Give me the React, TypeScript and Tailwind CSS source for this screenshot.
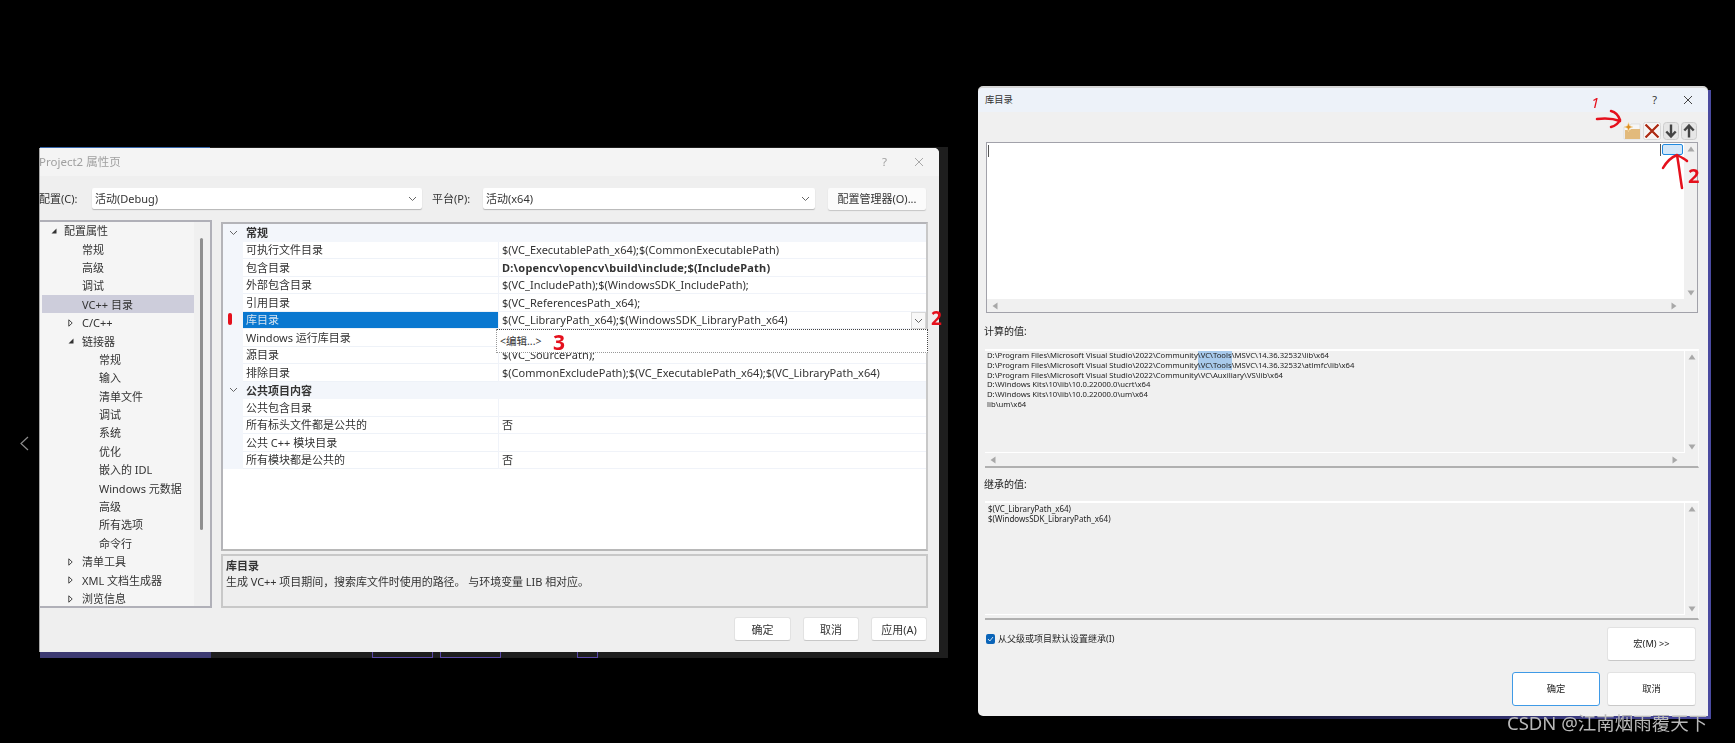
import React from "react";

const font = { fontFamily: '"Noto Sans","Noto Sans CJK SC",sans-serif' };

type Row = { name: string; value?: React.ReactNode; bold?: boolean; selected?: boolean };

const general: Row[] = [
  { name: "可执行文件目录", value: "$(VC_ExecutablePath_x64);$(CommonExecutablePath)" },
  { name: "包含目录", value: "D:\\opencv\\opencv\\build\\include;$(IncludePath)", bold: true },
  { name: "外部包含目录", value: "$(VC_IncludePath);$(WindowsSDK_IncludePath);" },
  { name: "引用目录", value: "$(VC_ReferencesPath_x64);" },
  { name: "库目录", value: "$(VC_LibraryPath_x64);$(WindowsSDK_LibraryPath_x64)", selected: true },
  { name: "Windows 运行库目录", value: "" },
  { name: "源目录", value: "$(VC_SourcePath);" },
  { name: "排除目录", value: "$(CommonExcludePath);$(VC_ExecutablePath_x64);$(VC_LibraryPath_x64)" },
];
const shared: Row[] = [
  { name: "公共包含目录" },
  { name: "所有标头文件都是公共的", value: "否" },
  { name: "公共 C++ 模块目录" },
  { name: "所有模块都是公共的", value: "否" },
];

type Node = { label: string; level: 0 | 1 | 2; tri?: "open" | "closed"; selected?: boolean };
const tree: Node[] = [
  { label: "配置属性", level: 0, tri: "open" },
  { label: "常规", level: 1 },
  { label: "高级", level: 1 },
  { label: "调试", level: 1 },
  { label: "VC++ 目录", level: 1, selected: true },
  { label: "C/C++", level: 1, tri: "closed" },
  { label: "链接器", level: 1, tri: "open" },
  { label: "常规", level: 2 },
  { label: "输入", level: 2 },
  { label: "清单文件", level: 2 },
  { label: "调试", level: 2 },
  { label: "系统", level: 2 },
  { label: "优化", level: 2 },
  { label: "嵌入的 IDL", level: 2 },
  { label: "Windows 元数据", level: 2 },
  { label: "高级", level: 2 },
  { label: "所有选项", level: 2 },
  { label: "命令行", level: 2 },
  { label: "清单工具", level: 1, tri: "closed" },
  { label: "XML 文档生成器", level: 1, tri: "closed" },
  { label: "浏览信息", level: 1, tri: "closed" },
];

function Chevron({ className = "" }: { className?: string }) {
  return (
    <svg width="9" height="6" viewBox="0 0 9 6" className={className}>
      <path d="M1 1l3.5 3.5L8 1" fill="none" stroke="#666" strokeWidth="1" />
    </svg>
  );
}

function Tri({ kind, className = "" }: { kind: "open" | "closed"; className?: string }) {
  return kind === "open" ? (
    <svg width="6" height="6" viewBox="0 0 6 6" className={className}>
      <path d="M5.5 0.5V5.5H0.5Z" fill="#333" />
    </svg>
  ) : (
    <svg width="5" height="8" viewBox="0 0 5 8" className={className}>
      <path d="M0.8 0.8L4.2 4L0.8 7.2Z" fill="#fff" stroke="#444" strokeWidth="1" />
    </svg>
  );
}

function Combo({ text, className }: { text: string; className: string }) {
  return (
    <div className={`h-[21px] bg-white rounded-[2px] shadow-[0_1px_1px_#b5b5b5] flex items-center justify-between pl-[3px] pr-[5px] ${className}`}>
      <span>{text}</span>
      <Chevron />
    </div>
  );
}

function GridRow({ row }: { row: Row }) {
  return (
    <div className="h-[17.5px] flex">
      <div className="w-[20px] bg-[#f3f6fb]" />
      <div className={`w-[255px] flex items-center pl-[3px] border-b border-[#eef2f8] ${row.selected ? "bg-[#0a78d0] text-[#d5e4f1]" : ""}`}>
        {row.name}
      </div>
      <div className={`flex-1 flex items-center pl-[3px] border-b border-l border-[#f0f3f9] whitespace-nowrap ${row.bold ? "font-bold tracking-[0.2px]" : ""}`}>
        {row.value}
      </div>
    </div>
  );
}

function GroupHeader({ label }: { label: string }) {
  return (
    <div className="h-[17.5px] flex items-center bg-[#f3f6fb] font-bold">
      <div className="w-[20px] flex justify-center">
        <Chevron />
      </div>
      <span className="pl-[3px]">{label}</span>
    </div>
  );
}

function Btn({ label, className = "" }: { label: string; className?: string }) {
  return (
    <div className={`bg-white rounded-[3px] border border-[#e2e2e2] border-b-[#c8c8c8] flex items-center justify-center ${className}`}>
      {label}
    </div>
  );
}

function PropertyDialog() {
  return (
    <div style={font} className="relative w-[900px] h-[504px] bg-[#efefef] border-l border-[#a8a8a8] rounded-tr-[5px] flex flex-col text-[11px] leading-none text-[#333] blur-[0.5px]">
      <div className="h-[28px] shrink-0 bg-[#f4f4f4] flex items-center justify-between pr-[15px] text-[11.5px] text-[#a0a0a0] rounded-tr-[5px]">
        <span className="-ml-[1px]">Project2 属性页</span>
        <div className="flex items-center gap-[27px]">
          <span>?</span>
          <svg width="10" height="10" viewBox="0 0 10 10">
            <path d="M1 1l8 8M9 1l-8 8" stroke="#a8a8a8" strokeWidth="1" />
          </svg>
        </div>
      </div>

      <div className="mt-[12px] h-[21px] shrink-0 flex items-center">
        <span className="w-[52px] -ml-[1px] mr-[1px]">配置(C):</span>
        <Combo text="活动(Debug)" className="w-[330px]" />
        <span className="ml-[10px] w-[51px]">平台(P):</span>
        <Combo text="活动(x64)" className="w-[332px]" />
        <div className="ml-[13px] w-[98px] h-[22px] bg-[#fbfbfb] rounded-[2px] shadow-[0_1px_1px_#c5c5c5] flex items-center justify-center">配置管理器(O)...</div>
      </div>

      <div className="mt-[11px] h-[388px] shrink-0 flex">
        <div className="w-[172px] border-y-2 border-r-2 border-[#b0b0b8] bg-[#f5f5f5] flex overflow-hidden">
          <div className="flex-1 -mt-[0.5px]">
            {tree.map((n, i) => (
              <div key={i} className={`relative h-[18.4px] flex items-center ${n.level === 0 ? "pl-[24px]" : n.level === 1 ? "pl-[42px]" : "pl-[59px]"} ${n.selected ? "bg-[#cdcddb] ml-[2px] !pl-[40px]" : ""}`}>
                {n.tri && <Tri kind={n.tri} className={`absolute ${n.level === 0 ? "left-[11px]" : "left-[28px]"}`} />}
                {n.label}
              </div>
            ))}
          </div>
          <div className="w-[16px] bg-[#f0f0f0] shrink-0 pt-[16px] pl-[6px]">
            <div className="w-[3px] h-[292px] bg-[#8f8f8f] rounded-full" />
          </div>
        </div>

        <div className="ml-[9px] w-[707px] flex flex-col">
          <div className="relative mt-[2px] h-[329px] border-2 border-[#b4b4b8] border-r-[#c8c8c8] border-b-[#b8b8b8] bg-white">
            <GroupHeader label="常规" />
            {general.map((r, i) => (
              <GridRow key={i} row={r} />
            ))}
            <GroupHeader label="公共项目内容" />
            {shared.map((r, i) => (
              <GridRow key={i} row={r} />
            ))}
            <div className="absolute right-0 top-[88px] w-[15px] h-[17px] bg-[#f8f8f8] border border-[#d8d8d8] flex items-center justify-center">
              <Chevron />
            </div>
            <div className="absolute left-[273px] top-[105px] w-[432px] h-[24px] bg-white border-t border-r border-dotted border-t-[#444] border-r-[#444] border-l border-b border-l-[#999] border-b-[#999] flex items-center pl-[3px] text-[10.5px]">
              &lt;编辑...&gt;
            </div>
          </div>
          <div className="mt-[3px] h-[54px] bg-[#eeeeee] border-2 border-[#c8c8c8] pl-[3px] pt-[1px]">
            <div className="font-bold h-[16px] flex items-center">库目录</div>
            <div className="h-[16px] flex items-center whitespace-pre tracking-[-0.05px]">生成 VC++ 项目期间，搜索库文件时使用的路径。 与环境变量 LIB 相对应。</div>
          </div>
        </div>
      </div>

      <div className="mt-[9px] flex justify-end gap-[12px] pr-[12px]">
        <Btn label="确定" className="w-[57px] h-[24px]" />
        <Btn label="取消" className="w-[56px] h-[24px]" />
        <Btn label="应用(A)" className="w-[56px] h-[24px]" />
      </div>
    </div>
  );
}

function ScrollBox({ h, white, noH, children }: { h: string; white?: boolean; noH?: boolean; children?: React.ReactNode }) {
  return (
    <div className={`relative ${h} shrink-0 ${white ? "border border-[#a2a2aa] bg-[#f0f0f0] mr-[10px]" : "border-t-2 border-white border-r border-r-[#fafafa] border-b-2 border-b-[#b0b0b0] mr-[9px]"} flex flex-col overflow-hidden`}>
      <div className="flex-1 flex min-h-0">
        <div className={`flex-1 relative ${white ? "bg-white" : "border-r border-b border-white"}`}>{children}</div>
        <div className="w-[13px] flex flex-col justify-between items-center py-[3px] shrink-0">
          <svg width="8" height="6" viewBox="0 0 8 6"><path d="M4 0.5L7.5 5.5H0.5Z" fill="#a8a8a8" /></svg>
          <svg width="8" height="6" viewBox="0 0 8 6"><path d="M4 5.5L7.5 0.5H0.5Z" fill="#a8a8a8" /></svg>
        </div>
      </div>
      {noH ? (
        <div className="h-[3px] shrink-0" />
      ) : (
        <div className="h-[13px] flex justify-between items-center pl-[5px] pr-[20px] shrink-0">
          <svg width="6" height="8" viewBox="0 0 6 8"><path d="M0.5 4L5.5 0.5V7.5Z" fill="#a8a8a8" /></svg>
          <svg width="6" height="8" viewBox="0 0 6 8"><path d="M5.5 4L0.5 0.5V7.5Z" fill="#a8a8a8" /></svg>
        </div>
      )}
    </div>
  );
}

const computed: React.ReactNode[] = [
  <>D:\Program Files\Microsoft Visual Studio\2022\Community<span className="bg-[#a8caec]">\VC\Tools</span>\MSVC\14.36.32532\lib\x64</>,
  <>D:\Program Files\Microsoft Visual Studio\2022\Community<span className="bg-[#a8caec]">\VC\Tools</span>\MSVC\14.36.32532\atlmfc\lib\x64</>,
  <>D:\Program Files\Microsoft Visual Studio\2022\Community\VC\Auxiliary\VS\lib\x64</>,
  <>D:\Windows Kits\10\lib\10.0.22000.0\ucrt\x64</>,
  <>D:\Windows Kits\10\lib\10.0.22000.0\um\x64</>,
  <>lib\um\x64</>,
];

function LibraryDialog() {
  return (
    <div style={font} className="w-[730px] h-[630px] bg-[#f0f0f0] rounded-t-[5px] rounded-bl-[5px] border-t-2 border-[#d6d6d6] flex flex-col text-[9.3px] text-[#222] blur-[0.45px]">
      <div className="h-[24px] shrink-0 bg-[#edf2f9] flex items-center justify-between pl-[7px] pr-[15px] rounded-t-[5px] text-[#333]">
        <span>库目录</span>
        <div className="flex items-center gap-[26px] text-[11px]">
          <span>?</span>
          <svg width="10" height="10" viewBox="0 0 10 10"><path d="M1 1l8 8M9 1l-8 8" stroke="#444" strokeWidth="1" /></svg>
        </div>
      </div>

      <div className="h-[30px] shrink-0 flex justify-end items-start pt-[10px] pr-[11px] gap-[2px]">
        <svg viewBox="0 0 18 18" width="18" height="18">
          <path d="M1 5h5l2-3h9v15H1Z" fill="#f6f6f6" stroke="#d8d8d8" strokeWidth="0.7" />
          <path d="M2 8h5l1-1h9v10H2Z" fill="#e2ba7c" />
          <path d="M5.500 0.500l1.200 3.300L10 5l-3.300 1.200L5.500 9.500 4.300 6.200 1 5l3.300-1.200Z" fill="#dc8f22" stroke="#f9e6bb" strokeWidth="0.6" />
        </svg>
        <svg viewBox="0 0 18 18" width="18" height="18">
          <rect x="0.500" y="0.500" width="17" height="17" rx="2" fill="#f3f3f3" stroke="#d8d8d8" />
          <path d="M2 2L16 16M16 2L2 16" stroke="#ffffff" strokeWidth="4" />
          <path d="M2.500 2.500L15.500 15.500M15.500 2.500L2.500 15.500" stroke="#ad2c15" strokeWidth="2.400" />
        </svg>
        <svg viewBox="0 0 16 18" width="16" height="18">
          <rect x="0.500" y="0.500" width="15" height="17" rx="3" fill="#e6e6e6" stroke="#cccccc" />
          <path d="M8 2.500V14M3.300 9.500L8 14.500l4.700-5" fill="none" stroke="#444" strokeWidth="2.400" />
        </svg>
        <svg viewBox="0 0 16 18" width="16" height="18">
          <rect x="0.500" y="0.500" width="15" height="17" rx="3" fill="#e6e6e6" stroke="#cccccc" />
          <path d="M8 15.500V4M3.300 8.500L8 3.500l4.700 5" fill="none" stroke="#444" strokeWidth="2.400" />
        </svg>
      </div>

      <div className="pl-[8px]">
        <ScrollBox h="h-[171px]" white>
          <div className="w-[1px] h-[12px] bg-[#555] ml-[1px] mt-[2px]" />
          <div className="absolute top-[1px] right-[1px] w-[21px] h-[11px] bg-[#d3e7f9] border border-[#1f8ae0] rounded-[2px]" />
          <div className="absolute top-[1px] right-[23px] w-[1px] h-[12px] bg-[#555]" />
        </ScrollBox>
      </div>

      <div className="h-[36px] shrink-0 flex items-center pl-[6px] text-[10px]">计算的值:</div>

      <div className="pl-[7px]">
        <ScrollBox h="h-[119px]">
          <div className="pl-[2px] leading-[9.8px] text-[7.7px] whitespace-nowrap">
            {computed.map((c, i) => (
              <div key={i} className="h-[9.8px]">{c}</div>
            ))}
          </div>
        </ScrollBox>
      </div>

      <div className="h-[33px] shrink-0 flex items-center pl-[6px] text-[10px]">继承的值:</div>

      <div className="pl-[7px]">
        <ScrollBox h="h-[119px]" noH>
          <div className="pl-[3px] pt-[1px] leading-[9.8px] text-[8px] whitespace-nowrap">
            <div>$(VC_LibraryPath_x64)</div>
            <div>$(WindowsSDK_LibraryPath_x64)</div>
          </div>
        </ScrollBox>
      </div>

      <div className="flex justify-between pt-[7px] pl-[8px] pr-[12px]">
        <div className="flex items-start pt-[7px] gap-[3px]">
          <div className="w-[9px] h-[10px] bg-[#0a64b8] rounded-[2px] flex items-center justify-center">
            <svg width="7" height="6" viewBox="0 0 7 6"><path d="M1 3l1.800 2L6 1" fill="none" stroke="#fff" strokeWidth="0.8" /></svg>
          </div>
          <span className="leading-[10px] text-[9px]">从父级或项目默认设置继承(I)</span>
        </div>
        <div className="flex flex-col items-end gap-[11px]">
          <Btn label="宏(M) >>" className="w-[89px] h-[34px]" />
          <div className="flex gap-[7px]">
            <Btn label="确定" className="w-[88px] h-[34px] !border-[#3f9ae6]" />
            <Btn label="取消" className="w-[89px] h-[34px]" />
          </div>
        </div>
      </div>
    </div>
  );
}

export default function App() {
  return (
    <div className="relative w-[1735px] h-[743px] bg-black overflow-hidden" style={font}>
      {/* chevron at the far left */}
      <svg className="absolute left-[19px] top-[435px]" width="11" height="17" viewBox="0 0 11 17">
        <path d="M9 2L2 8.500L9 15" fill="none" stroke="#8c8c8c" strokeWidth="1.200" />
      </svg>

      {/* desktop behind the left window */}
      <div className="absolute left-[40px] top-[147px] w-[908px] h-[511px] bg-[#1e1e1e]">
        <div className="absolute left-0 top-0 w-[170px] h-[2px] bg-[#3565a8]" />
        <div className="absolute left-0 bottom-0 w-[171px] h-[6px] bg-[#3d3a72]" />
        <div className="absolute left-[332px] bottom-0 w-[61px] h-[6px] border-x border-b border-[#5a48a8]" />
        <div className="absolute left-[400px] bottom-0 w-[61px] h-[6px] border-x border-b border-[#5a48a8]" />
        <div className="absolute left-[537px] bottom-0 w-[21px] h-[6px] border-x border-b border-[#5a48a8]" />
      </div>

      {/* desktop behind the right window */}
      <div className="absolute left-[1000px] top-[90px] w-[711px] h-[629px] bg-gradient-to-r from-black via-[#20204a] to-[#4a4aa0]" />

      <div className="absolute left-[39px] top-[148px]">
        <PropertyDialog />
      </div>
      <div className="absolute left-[978px] top-[86px]">
        <LibraryDialog />
      </div>

      {/* red annotations, left window */}
      <div className="absolute left-[228px] top-[313px] w-[4px] h-[12px] rounded-full bg-[#e5101c]" />
      <span className="absolute left-[931px] top-[309px] text-[19px] leading-[19px] font-bold text-[#e5101c]">2</span>
      <span className="absolute left-[553px] top-[332px] text-[21px] leading-[21px] font-bold text-[#e5101c]">3</span>

      {/* red annotations, right window */}
      <span className="absolute left-[1591px] top-[95px] text-[15px] leading-[15px] text-[#e5101c] italic">1</span>
      <svg className="absolute left-[1595px] top-[108px]" width="30" height="24" viewBox="0 0 30 24">
        <path d="M2 11C10 10 17 10 25 13M16 3C20 4 23 6 25 12C23 16 20 18 16 19" fill="none" stroke="#e5101c" strokeWidth="2.500" strokeLinecap="round" />
      </svg>
      <svg className="absolute left-[1660px] top-[148px]" width="30" height="42" viewBox="0 0 30 42">
        <path d="M22 40C20 28 19 18 17 7M3 20C7 13 12 9 17 7C21 9 25 11 27 13" fill="none" stroke="#e5101c" strokeWidth="2.500" strokeLinecap="round" />
      </svg>
      <span className="absolute left-[1688px] top-[166px] text-[20px] leading-[20px] font-bold text-[#e5101c]">2</span>

      <span className="absolute left-[1507px] top-[713px] text-[18.5px] leading-[20px] text-[#b9b9b9] whitespace-nowrap">CSDN @江南烟雨覆天下</span>
    </div>
  );
}
